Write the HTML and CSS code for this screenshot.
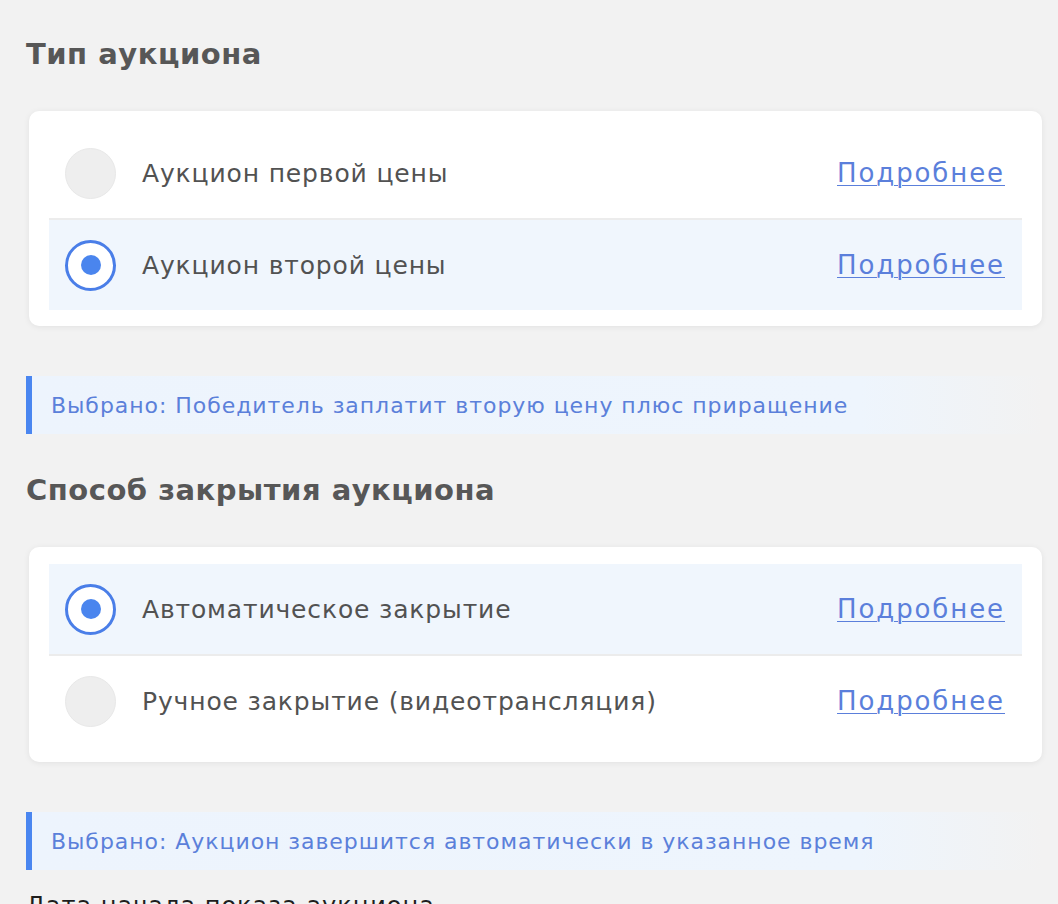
FILE: index.html
```html
<!DOCTYPE html>
<html lang="ru">
<head>
<meta charset="utf-8">
<title>Тип аукциона</title>
<link rel="stylesheet" href="styles.css">
</head>
<body>
<div class="page">
  <h2 class="section-title">Тип аукциона</h2>
  <div class="card">
    <div class="option">
      <span class="radio"></span>
      <span class="option-label">Аукцион первой цены</span>
      <a class="more" href="#">Подробнее</a>
    </div>
    <div class="divider"></div>
    <div class="option option-selected">
      <span class="radio radio-on"><span class="dot"></span></span>
      <span class="option-label">Аукцион второй цены</span>
      <a class="more" href="#">Подробнее</a>
    </div>
  </div>
  <div class="note">Выбрано: Победитель заплатит вторую цену плюс приращение</div>

  <h2 class="section-title">Способ закрытия аукциона</h2>
  <div class="card">
    <div class="option option-selected">
      <span class="radio radio-on"><span class="dot"></span></span>
      <span class="option-label">Автоматическое закрытие</span>
      <a class="more" href="#">Подробнее</a>
    </div>
    <div class="divider"></div>
    <div class="option">
      <span class="radio"></span>
      <span class="option-label">Ручное закрытие (видеотрансляция)</span>
      <a class="more" href="#">Подробнее</a>
    </div>
  </div>
  <div class="note">Выбрано: Аукцион завершится автоматически в указанное время</div>

  <div class="field-label">Дата начала показа аукциона</div>
</div>
</body>
</html>
```

FILE: styles.css
```css
html, body {
  margin: 0;
  padding: 0;
  background: #f2f2f2;
  font-family: "DejaVu Sans", "Noto Sans", sans-serif;
}

.page {
  padding: 36px 16px 0 26px;
}

.section-title {
  margin: 0 0 39px 0;
  font-size: 29px;
  line-height: 36px;
  font-weight: bold;
  letter-spacing: 0.5px;
  color: #575757;
}

.card {
  margin: 0 0 50px 3px;
  background: #ffffff;
  border-radius: 10px;
  box-shadow: 0 1px 6px rgba(0, 0, 0, 0.07);
  padding: 17px 20px 16px 20px;
}

.option {
  display: flex;
  align-items: center;
  height: 90px;
  padding: 0 17px 0 16px;
}

.option-selected {
  background: #f0f6fd;
}

.divider {
  height: 2px;
  background: #ececec;
}

.radio {
  flex: none;
  width: 51px;
  height: 51px;
  box-sizing: border-box;
  border-radius: 50%;
  background: #eeeeee;
  border: 1px solid #e8e8e8;
  display: flex;
  align-items: center;
  justify-content: center;
}

.radio-on {
  background: #ffffff;
  border: 3px solid #4a7ee8;
}

.dot {
  width: 20px;
  height: 20px;
  border-radius: 50%;
  background: #4a85ee;
}

.option-label {
  flex: 1;
  margin-left: 26px;
  font-size: 25px;
  letter-spacing: 0.85px;
  color: #525252;
}

.more {
  font-size: 26px;
  letter-spacing: 1.9px;
  color: #5b7fdb;
  text-decoration: underline;
  text-decoration-thickness: 1px;
  text-underline-offset: 3px;
}

.note {
  margin: 0 0 38px 0;
  height: 58px;
  box-sizing: border-box;
  border-left: 6px solid #4a86f0;
  padding-left: 19px;
  display: flex;
  align-items: center;
  font-size: 22px;
  letter-spacing: 0.95px;
  color: #5b80da;
  background: linear-gradient(90deg, #edf4fd 0%, #eef5fd 82%, #f2f2f2 100%);
}

.field-label {
  margin-top: -16px;
  font-size: 24px;
  letter-spacing: 1px;
  color: #1e1e1e;
}
```
